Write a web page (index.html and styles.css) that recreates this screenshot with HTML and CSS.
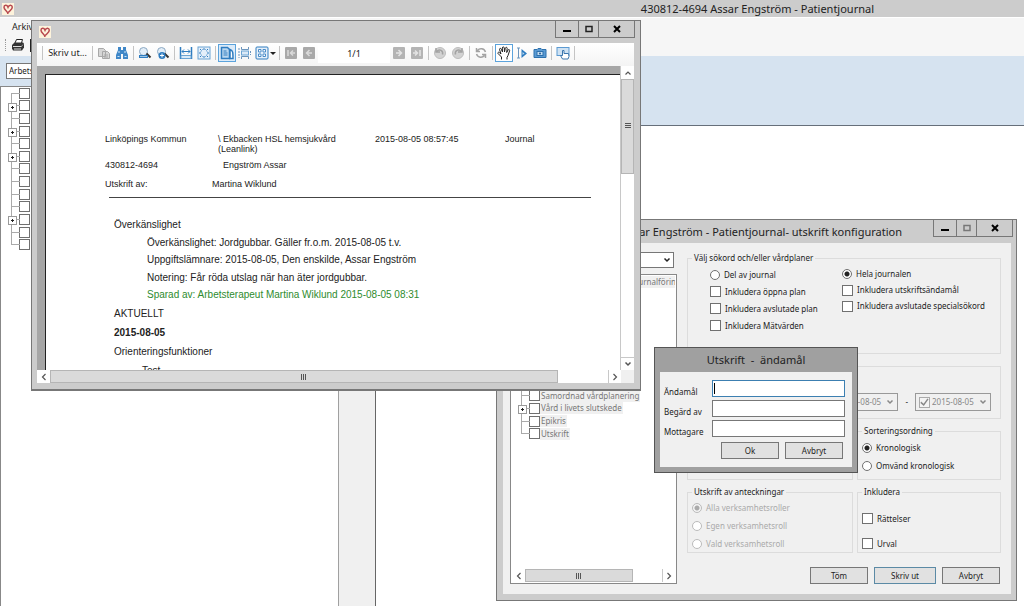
FILE: index.html
```html
<!DOCTYPE html>
<html lang="sv">

<head>
    <meta charset="UTF-8">
    <meta name="viewport" content="width=device-width, initial-scale=1.0">
    <title>430812-4694 Assar Engström - Patientjournal</title>
    <link rel="stylesheet" href="styles.css">
</head>

<body>

    <!-- shared shapes -->
    <svg class="defs" aria-hidden="true">
        <symbol id="heart" viewBox="0 0 12 12">
            <rect width="12" height="12" fill="#fdf3dc" />
            <path d="M6 11C6 8.500 2 7 2 4.200 2 2 5 1.500 6 4.200 7 1.500 10 1.500 10.300 4c.2 2-1.800 3.200-4 5.500" fill="none" stroke="#b8484e" stroke-width="1.500" />
        </symbol>
        <symbol id="down" viewBox="0 0 8 8">
            <path d="M1.500 2.500L4 5l2.500-2.500" fill="none" stroke="currentColor" stroke-width="1.500" />
        </symbol>
        <symbol id="up" viewBox="0 0 8 8">
            <path d="M1.500 5.500L4 3l2.500 2.500" fill="none" stroke="currentColor" stroke-width="1.200" />
        </symbol>
        <symbol id="left" viewBox="0 0 8 8">
            <path d="M5.500 1L2.500 4l3 3" fill="none" stroke="currentColor" stroke-width="1.200" />
        </symbol>
        <symbol id="right" viewBox="0 0 8 8">
            <path d="M2.500 1l3 3-3 3" fill="none" stroke="currentColor" stroke-width="1.200" />
        </symbol>
        <symbol id="min" viewBox="0 0 10 10">
            <path d="M1 7h8" stroke="#000" stroke-width="2" />
        </symbol>
        <symbol id="max" viewBox="0 0 10 10">
            <rect x="2" y="2.500" width="6" height="5" fill="none" stroke="currentColor" stroke-width="1.500" />
        </symbol>
        <symbol id="close" viewBox="0 0 10 10">
            <path d="M2 2l6 6M8 2L2 8" stroke="#000" stroke-width="2" />
        </symbol>
    </svg>

    <div class="desktop">

        <!-- main window -->
        <header class="app-title">
            <svg class="app-icon"><use href="#heart" /></svg>
            <h1>430812-4694 Assar Engström - Patientjournal</h1>
        </header>
        <nav class="app-menu">
            <button>Arkiv</button>
        </nav>
        <div class="app-tools">
            <span class="handle"></span>
            <button aria-label="Skriv ut">
                <svg width="14" height="13" viewBox="0 0 14 13">
                    <path d="M4 4l1.500-3.500h6L10.500 4" fill="#fff" stroke="#222" />
                    <path d="M1 6l2.500-2.500h8.500l1 1v4l-2 3H2L1 9.500z" fill="#333" />
                    <path d="M2 7.500h8.500M3 10h7" stroke="#ddd" />
                    <path d="M10 8l2-2.500" stroke="#999" />
                </svg>
            </button>
            <button aria-label="Förhandsgranska">
                <svg width="12" height="13" viewBox="0 0 12 13"><rect x="1" y="1" width="9" height="11" fill="#fff" stroke="#222" stroke-width="2" /></svg>
            </button>
        </div>
        <main class="app-body">
            <aside class="side">
                <div class="side-head">
                    <div class="dropdown">
                        <select aria-label="Journal">
                            <option>Arbetsterapeut</option>
                        </select>
                        <svg><use href="#down" /></svg>
                    </div>
                </div>
                <div class="side-tree">
                    <ul class="tree">
                        <li><input type="checkbox" aria-label="Sökord 1"></li>
                        <li class="node"><input type="checkbox" aria-label="Sökord 2"></li>
                        <li><input type="checkbox" aria-label="Sökord 3"></li>
                        <li class="node"><input type="checkbox" aria-label="Sökord 4"></li>
                        <li><input type="checkbox" aria-label="Sökord 5"></li>
                        <li class="node"><input type="checkbox" aria-label="Sökord 6"></li>
                        <li><input type="checkbox" aria-label="Sökord 7"></li>
                        <li><input type="checkbox" aria-label="Sökord 8"></li>
                        <li><input type="checkbox" aria-label="Sökord 9"></li>
                        <li><input type="checkbox" aria-label="Sökord 10"></li>
                        <li class="node"><input type="checkbox" aria-label="Sökord 11"></li>
                        <li><input type="checkbox" aria-label="Sökord 12"></li>
                        <li><input type="checkbox" aria-label="Sökord 13"></li>
                    </ul>
                </div>
            </aside>
            <div class="splitter"></div>
            <section class="record">
                <div class="record-head"></div>
                <div class="record-page"></div>
            </section>
        </main>

        <!-- print configuration -->
        <section class="window config">
            <header class="titlebar">
                <h2>430812-4694 Assar Engström - Patientjournal- utskrift konfiguration</h2>
                <div class="caption">
                    <button aria-label="Minimera"><svg><use href="#min" /></svg></button>
                    <button class="off" aria-label="Maximera"><svg><use href="#max" /></svg></button>
                    <button class="wide" aria-label="Stäng"><svg><use href="#close" /></svg></button>
                </div>
            </header>
            <div class="config-body">
                <div class="picker">
                    <div class="dropdown">
                        <select aria-label="Mall">
                            <option></option>
                        </select>
                        <svg><use href="#down" /></svg>
                    </div>
                    <div class="tree-box">
                        <ul class="tree">
                            <li class="node"><label><input type="checkbox"><span>Arbetsterapeut: samlad journalföring</span></label></li>
                            <li><input type="checkbox" aria-label="Rad 2"></li>
                            <li><input type="checkbox" aria-label="Rad 3"></li>
                            <li><input type="checkbox" aria-label="Rad 4"></li>
                            <li><input type="checkbox" aria-label="Rad 5"></li>
                            <li><input type="checkbox" aria-label="Rad 6"></li>
                            <li><input type="checkbox" aria-label="Rad 7"></li>
                            <li><input type="checkbox" aria-label="Rad 8"></li>
                            <li><input type="checkbox" aria-label="Rad 9"></li>
                            <li><label><input type="checkbox"><span>Samordnad vårdplanering</span></label></li>
                            <li class="node"><label><input type="checkbox"><span>Vård i livets slutskede</span></label></li>
                            <li><label><input type="checkbox"><span>Epikris</span></label></li>
                            <li><label><input type="checkbox"><span>Utskrift</span></label></li>
                        </ul>
                        <div class="scroll-x">
                            <button aria-label="Vänster"><svg><use href="#left" /></svg></button>
                            <div class="track"><div class="thumb"><i></i></div></div>
                            <button aria-label="Höger"><svg><use href="#right" /></svg></button>
                        </div>
                    </div>
                </div>

                <form class="options">
                    <fieldset class="plans">
                        <legend>Välj sökord och/eller vårdplaner</legend>
                        <div class="columns">
                            <div>
                                <label><input type="radio" name="scope">Del av journal</label>
                                <label><input type="checkbox">Inkludera öppna plan</label>
                                <label><input type="checkbox">Inkludera avslutade plan</label>
                                <label><input type="checkbox">Inkludera Mätvärden</label>
                            </div>
                            <div class="tight">
                                <label><input type="radio" name="scope" checked>Hela journalen</label>
                                <label><input type="checkbox">Inkludera utskriftsändamål</label>
                                <label><input type="checkbox">Inkludera avslutade specialsökord</label>
                            </div>
                        </div>
                    </fieldset>
                    <fieldset class="period">
                        <div class="date">
                            <input type="checkbox" aria-label="Från" checked disabled>
                            <div class="dropdown">
                                <select aria-label="Från datum" disabled><option>2015-08-05</option></select>
                                <svg><use href="#down" /></svg>
                            </div>
                        </div>
                        <span>-</span>
                        <div class="date">
                            <input type="checkbox" aria-label="Till" checked disabled>
                            <div class="dropdown">
                                <select aria-label="Till datum" disabled><option>2015-08-05</option></select>
                                <svg><use href="#down" /></svg>
                            </div>
                        </div>
                    </fieldset>
                    <div class="pair">
                        <fieldset class="order"></fieldset>
                        <fieldset class="order">
                            <legend>Sorteringsordning</legend>
                            <label><input type="radio" name="order" checked>Kronologisk</label>
                            <label><input type="radio" name="order">Omvänd kronologisk</label>
                        </fieldset>
                    </div>
                    <div class="pair">
                        <fieldset class="roles">
                            <legend>Utskrift av anteckningar</legend>
                            <label><input type="radio" name="role" checked disabled>Alla verksamhetsroller</label>
                            <label><input type="radio" name="role" disabled>Egen verksamhetsroll</label>
                            <label><input type="radio" name="role" disabled>Vald verksamhetsroll</label>
                        </fieldset>
                        <fieldset class="include">
                            <legend>Inkludera</legend>
                            <label><input type="checkbox">Rättelser</label>
                            <label><input type="checkbox">Urval</label>
                        </fieldset>
                    </div>
                    <div class="buttons">
                        <button type="button" class="btn">Töm</button>
                        <button type="button" class="btn default">Skriv ut</button>
                        <button type="button" class="btn">Avbryt</button>
                    </div>
                </form>
            </div>
        </section>

        <!-- print preview -->
        <section class="window preview">
            <header class="titlebar">
                <svg class="app-icon"><use href="#heart" /></svg>
                <div class="caption">
                    <button aria-label="Minimera"><svg><use href="#min" /></svg></button>
                    <button aria-label="Maximera"><svg><use href="#max" /></svg></button>
                    <button class="wide" aria-label="Stäng"><svg><use href="#close" /></svg></button>
                </div>
            </header>
            <div class="toolbar">
                <span class="sep"></span>
                <button class="print">Skriv ut...</button>
                <span class="sep"></span>
                <button aria-label="Kopiera">
                    <svg viewBox="0 0 14 14"><path d="M1.500 2.500h5l2 2v6h-7zM5.500 5.500h5l2 2v5h-7z" fill="#d6d6d6" stroke="#a8a8a8" /><path d="M7 9h4M7 11h4" stroke="#a8a8a8" /></svg>
                </button>
                <button aria-label="Sök">
                    <svg viewBox="0 0 14 14"><path d="M3 1h3v3h2V1h3v3l2 5v4H8V8H6v5H1V9l2-5z" fill="#3f87c8" /><path d="M2.500 10.500h2M9.500 10.500h2M4 5v2M10 5v2" stroke="#cfe4f6" /></svg>
                </button>
                <span class="sep"></span>
                <button aria-label="Zooma ut">
                    <svg viewBox="0 0 14 14"><circle cx="5.500" cy="5.500" r="4" fill="#e3eef8" stroke="#8ba8c2" /><path d="M8.500 7.500l4 4" stroke="#333" stroke-width="2" /><path d="M1 10.500h9" stroke="#2e7cc0" stroke-width="3" /><path d="M2 10.500h7" stroke="#9cc4e6" /></svg>
                </button>
                <button aria-label="Zooma in">
                    <svg viewBox="0 0 14 14"><circle cx="5.500" cy="5.500" r="4" fill="#e3eef8" stroke="#8ba8c2" /><path d="M8.500 7.500l4 4" stroke="#333" stroke-width="2" /><circle cx="6" cy="9.500" r="3.500" fill="#2e7cc0" /><path d="M4 9.500h4M6 7.500v4" stroke="#fff" /></svg>
                </button>
                <span class="sep"></span>
                <button aria-label="Sidbredd">
                    <svg viewBox="0 0 14 14"><path d="M1.500 1v12M12.500 1v12" stroke="#2e7cc0" stroke-width="1.500" /><path d="M3 5.500h8M5 3.500l-2 2 2 2M9 3.500l2 2-2 2" fill="none" stroke="#2e7cc0" /><path d="M2 9.500h10v3H2z" fill="#d9eaf8" stroke="#6ba4d4" /></svg>
                </button>
                <button aria-label="Hela sidan">
                    <svg viewBox="0 0 14 14"><rect x="1" y="1" width="12" height="12" fill="#e4effa" stroke="#6ba4d4" /><path d="M5.500 4L7 2.500 8.500 4M5.500 10L7 11.500 8.500 10M4 5.500L2.500 7 4 8.500M10 5.500L11.500 7 10 8.500M3 3l1.500 1.500M11 3L9.500 4.500M3 11l1.500-1.500M11 11L9.500 9.500" fill="none" stroke="#2e7cc0" /></svg>
                </button>
                <span class="sep"></span>
                <button class="on" aria-label="En sida">
                    <svg viewBox="0 0 14 14"><path d="M1.500 1.500h6l2 2v9h-8z" fill="#b9d6ef" stroke="#2e7cc0" stroke-width="1.500" /><path d="M10 3.500c3 1 3 3 3 9h-3z" fill="#fff" stroke="#2e7cc0" stroke-width="1.500" /><path d="M3.500 5h3M3.500 7h4M3.500 9h4" stroke="#2e7cc0" /></svg>
                </button>
                <button aria-label="Kontinuerlig">
                    <svg viewBox="0 0 14 14"><path d="M3.500 1v2.500h7V1M3.500 13v-2.500h7V13" fill="none" stroke="#6b95bd" /><rect x="3.500" y="5" width="7" height="4" fill="#dceaf7" stroke="#6ba4d4" /><path d="M1 2v10M12.500 5v4" stroke="#6b95bd" stroke-dasharray="2 1" /></svg>
                </button>
                <button class="more" aria-label="Flera sidor">
                    <svg viewBox="0 0 14 14"><rect x="1" y="1" width="12" height="12" rx="1" fill="#e6f0fa" stroke="#2e7cc0" /><path d="M3.500 3.500h2.500v2.500H3.500zM8 3.500h2.500v2.500H8zM3.500 8h2.500v2.500H3.500zM8 8h2.500v2.500H8z" fill="#fff" stroke="#4a8cc8" /></svg>
                    <i></i>
                </button>
                <span class="sep"></span>
                <button aria-label="Första sidan">
                    <svg viewBox="0 0 14 14"><rect x="1" y="1" width="12" height="12" rx="1" fill="#a9a9a9" /><path d="M4 4v6M11 7H7M9 4.500L6.500 7 9 9.500" fill="none" stroke="#dadada" stroke-width="1.500" /></svg>
                </button>
                <button aria-label="Föregående sida">
                    <svg viewBox="0 0 14 14"><rect x="1" y="1" width="12" height="12" rx="1" fill="#a9a9a9" /><path d="M10 7H5M7.500 4L4.500 7l3 3" fill="none" stroke="#dadada" stroke-width="1.500" /></svg>
                </button>
                <input class="page-no" type="text" value="1/1" aria-label="Sida">
                <button aria-label="Nästa sida">
                    <svg viewBox="0 0 14 14"><rect x="1" y="1" width="12" height="12" rx="1" fill="#b4b4b4" /><path d="M4 7h5M6.500 4l3 3-3 3" fill="none" stroke="#e4e4e4" stroke-width="1.500" /></svg>
                </button>
                <button aria-label="Sista sidan">
                    <svg viewBox="0 0 14 14"><rect x="1" y="1" width="12" height="12" rx="1" fill="#b4b4b4" /><path d="M10 4v6M3 7h4M5 4.500L7.500 7 5 9.500" fill="none" stroke="#e4e4e4" stroke-width="1.500" /></svg>
                </button>
                <span class="sep"></span>
                <button aria-label="Bakåt">
                    <svg viewBox="0 0 14 14"><circle cx="7" cy="7" r="5.500" fill="#d2d2d2" stroke="#bdbdbd" /><path d="M3 2v4h4M3.500 5.500c3-3 7-1 6 3" fill="none" stroke="#a3a3a3" stroke-width="1.500" /></svg>
                </button>
                <button aria-label="Framåt">
                    <svg viewBox="0 0 14 14"><circle cx="7" cy="7" r="5.500" fill="#d2d2d2" stroke="#bdbdbd" /><path d="M11 2v4H7M10.500 5.500c-3-3-7-1-6 3" fill="none" stroke="#a3a3a3" stroke-width="1.500" /></svg>
                </button>
                <span class="sep"></span>
                <button aria-label="Uppdatera">
                    <svg viewBox="0 0 14 14"><path d="M11.500 6C10 2 5.500 2 3.500 4.500M2.500 8c1.500 4 6 4 8 1.500M2.500 2v3.500H6M11.500 12V8.500H8" fill="none" stroke="#a3a3a3" stroke-width="1.500" /></svg>
                </button>
                <span class="sep"></span>
                <button class="on hand" aria-label="Panorera">
                    <svg viewBox="0 0 14 14"><path d="M4.500 13.500V11L1 7.500c-.5-1.500 1-1.500 1.500-.8L4 8 2.500 3.500c0-1.500 1.500-1.500 1.800-.3L5.500 6 5.300 2c.2-1.500 1.700-1.500 2 0L7.500 6l.8-3.800c.5-1.400 2-1 1.900.2L9.700 6.500l1.300-2.500c.8-1 2-.3 1.600.8L11 9.500l-1 2v2" fill="#fff" stroke="#222" /></svg>
                </button>
                <button aria-label="Markera text">
                    <svg viewBox="0 0 14 14"><path d="M2 2h3M3.500 2v10M2 12h3" stroke="#6b95bd" /><path d="M6.500 3l5.500 4.500-5.500 4.500z" fill="#2e7cc0" /><path d="M7.500 6l2 1.500-2 1.500z" fill="#bcd9f0" /></svg>
                </button>
                <button aria-label="Ögonblicksbild">
                    <svg viewBox="0 0 14 14"><path d="M1 3.500h3L5 2.500h3l1 1h4v8H1z" fill="#5b9ad2" stroke="#2c70ad" /><rect x="4" y="5.500" width="6" height="4" fill="#c6def2" stroke="#2c70ad" /><circle cx="7" cy="7.500" r="1" fill="#1f5c96" /></svg>
                </button>
                <span class="sep"></span>
                <button aria-label="Pekläge">
                    <svg viewBox="0 0 14 14"><rect x="1" y="1.500" width="12" height="8" fill="#cfe2f3" stroke="#5b9ad2" /><path d="M6.500 13L4.500 9.500l2 0V4.500h1.500v3h4.500l.5 3-1 2.500z" fill="#fff" stroke="#3a76ae" /></svg>
                </button>
                <span class="sep"></span>
            </div>
            <div class="viewer">
                <article class="sheet">
                    <div class="sheet-head">
                        <span>Linköpings Kommun</span>
                        <span>\ Ekbacken HSL hemsjukvård<br>(Leanlink)</span>
                        <span>2015-08-05 08:57:45</span>
                        <span>Journal</span>
                    </div>
                    <div class="sheet-head patient">
                        <span>430812-4694</span>
                        <span>Engström Assar</span>
                    </div>
                    <div class="sheet-head author">
                        <span>Utskrift av:</span>
                        <span>Martina Wiklund</span>
                    </div>
                    <hr>
                    <div class="notes">
                        <h3>Överkänslighet</h3>
                        <div class="entry">
                            <p>Överkänslighet: Jordgubbar. Gäller fr.o.m. 2015-08-05 t.v.</p>
                            <p>Uppgiftslämnare: 2015-08-05, Den enskilde, Assar Engström</p>
                            <p>Notering: Får röda utslag när han äter jordgubbar.</p>
                            <p class="saved">Sparad av: Arbetsterapeut Martina Wiklund 2015-08-05 08:31</p>
                        </div>
                        <p>AKTUELLT</p>
                        <p><b>2015-08-05</b></p>
                        <p>Orienteringsfunktioner</p>
                        <p class="sub">Test</p>
                    </div>
                </article>
                <div class="scroll-y">
                    <button aria-label="Upp"><svg><use href="#up" /></svg></button>
                    <div class="track"><div class="thumb"><i></i></div></div>
                    <button aria-label="Ned"><svg><use href="#down" /></svg></button>
                </div>
            </div>
            <div class="scroll-x">
                <button aria-label="Vänster"><svg><use href="#left" /></svg></button>
                <div class="track"><div class="thumb"><i></i></div></div>
                <button aria-label="Höger"><svg><use href="#right" /></svg></button>
            </div>
        </section>

        <!-- purpose dialog -->
        <section class="window dialog">
            <h2>Utskrift&nbsp; -&nbsp; ändamål</h2>
            <form>
                <label for="purpose">Ändamål</label>
                <div class="field"><input type="text" id="purpose" class="active"><span class="caret"></span></div>
                <label for="asked">Begärd av</label>
                <div class="field"><input type="text" id="asked"></div>
                <label for="receiver">Mottagare</label>
                <div class="field"><input type="text" id="receiver"></div>
                <div class="buttons">
                    <button type="button" class="btn">Ok</button>
                    <button type="button" class="btn">Avbryt</button>
                </div>
            </form>
        </section>

    </div>

</body>

</html>
```

FILE: styles.css
```css
* {
    box-sizing: border-box;
}

body {
    margin: 0;
    font-family: "Noto Sans", sans-serif;
    font-size: 8px;
    line-height: 12px;
    color: #222;
    background-color: #fff;
}

h1, h2, h3, p, ul {
    margin: 0;
    padding: 0;
    font-weight: normal;
}

button, input, select {
    font: inherit;
    color: inherit;
    margin: 0;
    padding: 0;
}

button {
    border: none;
    background: none;
    display: flex;
    align-items: center;
    justify-content: center;
}

.defs {
    position: absolute;
    width: 0;
    height: 0;
}

.desktop {
    position: relative;
    min-height: 100vh;
    overflow: hidden;
    display: flex;
    flex-direction: column;
}

.app-icon {
    width: 12px;
    height: 12px;
}

/* Main window */

.app-title {
    display: flex;
    align-items: center;
    justify-content: space-between;
    height: 18px;
    padding: 0 150px 0 2px;
    background-color: #ccc;
    border-bottom: 1px solid #fff;
}

h1, h2 {
    font-size: 11px;
    line-height: 16px;
}

.app-menu {
    padding: 3px 12px;
    background-color: #f6f6f6;
    font-size: 9px;
}

.app-tools {
    display: flex;
    align-items: center;
    gap: 5px;
    height: 20px;
    padding: 0 5px 2px;
    background-color: #f6f6f6;
}

.handle {
    height: 12px;
    border-left: 1px dotted #999;
}

.app-body {
    flex: 1;
    display: flex;
}

.side {
    width: 339px;
    border-right: 1px solid #a0a0a0;
    display: flex;
    flex-direction: column;
}

.side-head {
    height: 30px;
    padding: 7px 6px;
    background-color: #d6e3f0;
}

.side-tree {
    flex: 1;
    padding-left: 10px;
    border-top: 1px solid #888;
    border-left: 1px solid #888;
}

.splitter {
    width: 37px;
    background-color: #f0f0f0;
    border-right: 1px solid #666;
}

.record {
    flex: 1;
}

.record-head {
    height: 70px;
    background-color: #d6e3f0;
    border-bottom: 1px solid #666f7a;
}

/* Controls */

.dropdown {
    position: relative;
}

.dropdown select {
    appearance: none;
    display: block;
    width: 100%;
    height: 16px;
    padding: 0 2px;
    border: 1px solid #777;
    border-radius: 0;
    background-color: #fff;
}

.dropdown svg {
    position: absolute;
    right: 3px;
    top: 4px;
    width: 8px;
    height: 8px;
    pointer-events: none;
}

input[type="checkbox"], input[type="radio"] {
    appearance: none;
    flex: none;
    width: 11px;
    height: 11px;
    border: 1px solid #707070;
    background-color: #fff;
}

input[type="radio"] {
    width: 10px;
    height: 10px;
    border-radius: 50%;
}

input[type="radio"]:checked {
    background: radial-gradient(circle, #222 2px, #fff 3px);
}

input[type="radio"]:disabled {
    border-color: #bbb;
}

input[type="radio"]:disabled:checked {
    background: radial-gradient(circle, #aaa 2px, #f4f4f4 3px);
}

input[type="checkbox"]:disabled {
    border-color: #aaa;
    background-color: #f4f4f4;
}

input[type="checkbox"]:checked::before {
    content: "";
    display: block;
    height: 9px;
    background-color: #888;
    clip-path: polygon(12% 45%, 40% 70%, 82% 10%, 95% 20%, 42% 95%, 5% 60%);
}

.btn {
    width: 58px;
    height: 17px;
    border: 1px solid #777;
    background-color: #e1e1e1;
}

.btn.default {
    width: 62px;
    border-color: #5b8aa5;
}

.buttons {
    display: flex;
    justify-content: flex-end;
    gap: 6px;
}

.tree {
    list-style: none;
    display: grid;
    grid-template-rows: repeat(13, 1fr);
    height: 164px;
}

.tree li {
    position: relative;
    display: flex;
    align-items: center;
    padding-left: 8px;
    white-space: nowrap;
    color: #777;
}

.tree label {
    display: flex;
    align-items: center;
}

.tree label span {
    background-color: #f0f0f0;
    line-height: 12px;
    padding: 0 1px;
}

/* connector lines */
.tree li::before {
    content: "";
    width: 8px;
    height: 100%;
    position: absolute;
    left: 0;
    top: 0;
    border-left: 1px solid #aaa;
    background: linear-gradient(#aaa, #aaa) 0 50% / 8px 1px no-repeat;
}

.tree li:first-child::before {
    top: 50%;
    height: 50%;
    background-position: 0 0;
}

.tree li:last-child::before {
    height: 50%;
    background-position: 0 100%;
}

.tree .node::after {
    content: "";
    position: absolute;
    left: -3px;
    top: 3px;
    width: 7px;
    height: 7px;
    border: 1px solid #999;
    background: linear-gradient(#222, #222) 50% 50% / 3px 1px no-repeat, linear-gradient(#222, #222) 50% 50% / 1px 3px no-repeat, #fff;
}

/* Scroll bars */

.scroll-x, .scroll-y {
    display: flex;
    background-color: #fff;
    color: #555;
}

.scroll-x {
    height: 13px;
}

.scroll-y {
    flex-direction: column;
    width: 14px;
    border-left: 1px solid #c8c8c8;
}

.scroll-x button, .scroll-y button {
    width: 13px;
    height: 13px;
}

.scroll-x button:last-child {
    border-left: 1px solid #c8c8c8;
}

.scroll-y button:last-child {
    border-top: 1px solid #c8c8c8;
}

.scroll-x svg, .scroll-y svg {
    width: 8px;
    height: 8px;
}

.track {
    flex: 1;
}

.thumb {
    display: flex;
    align-items: center;
    justify-content: center;
    background-color: #dadada;
    border: 1px solid #b5b5b5;
}

.scroll-x .thumb {
    width: 91%;
    height: 13px;
}

.scroll-y .thumb {
    height: 34%;
}

.thumb i {
    width: 6px;
    height: 6px;
    background: repeating-linear-gradient(90deg, #555 0 1px, #dadada 1px 2px);
}

.scroll-y .thumb i {
    background: repeating-linear-gradient(#555 0 1px, #dadada 1px 2px);
}

/* Windows */

.window {
    position: absolute;
    border: 1px solid #777;
    background-color: #ccc;
}

.titlebar {
    display: flex;
    align-items: center;
    height: 23px;
}

.caption {
    display: flex;
    align-self: flex-start;
    margin-left: auto;
    border: 1px solid #777;
    border-top: none;
}

.caption button {
    width: 22px;
    height: 16px;
}

.caption button + button {
    width: 20px;
    border-left: 1px solid #777;
}

.caption button.wide {
    width: 36px;
}

.caption button.off {
    color: #777;
}

.caption svg {
    width: 10px;
    height: 10px;
}

/* Print preview */

.preview {
    left: 31px;
    top: 20px;
    width: calc(100% - 414px);
    padding: 0 6px 6px 5px;
    border-width: 1px 1px 2px;
}

.preview .titlebar {
    height: 22px;
    padding-left: 2px;
}

.preview .caption {
    margin-right: -1px;
}

.toolbar {
    display: flex;
    align-items: center;
    height: 23px;
    padding: 0 0 3px 3px;
    background: linear-gradient(#fff, #f4f4f4);
}

.toolbar button {
    flex: none;
    width: 18px;
    height: 18px;
}

.toolbar svg {
    flex: none;
    width: 14px;
    height: 14px;
}

.toolbar .print {
    width: 45px;
    font-size: 9px;
}

.toolbar .on {
    border: 1px solid #5ba3dc;
    background-color: #dcebf9;
}

.toolbar .hand {
    background-color: #fff;
}

.toolbar .more {
    width: 23px;
    gap: 1px;
}

.more i {
    border: 3px solid transparent;
    border-top-color: #222;
    border-bottom: none;
}

.sep {
    flex: none;
    width: 1px;
    height: 14px;
    margin: 0 2px;
    background-color: #c4c4c4;
}

.page-no {
    width: 72px;
    height: 20px;
    border: none;
    background-color: #fff;
    font-size: 9px;
    text-align: center;
}

.viewer {
    display: flex;
    height: 304px;
    background-color: #a6a6a6;
}

.sheet {
    flex: 1;
    margin: 8px 0 0 8px;
    padding: 59px 29px 0 59px;
    overflow: hidden;
    background-color: #fff;
    border-left: 1px solid #222;
    border-top: 1px solid #222;
    font-family: "Liberation Sans", Arial, sans-serif;
    font-size: 10px;
}

.sheet-head {
    display: grid;
    grid-template-columns: 113px 157px 130px 1fr;
    font-size: 9px;
    line-height: 10px;
}

.sheet-head.patient {
    grid-template-columns: 118px 1fr;
    margin-top: 6px;
}

.sheet-head.author {
    grid-template-columns: 107px 1fr;
    margin-top: 9px;
}

.sheet hr {
    margin: 8px 0 0 4px;
    border: none;
    border-top: 1px solid #444;
}

.notes {
    padding: 18px 0 0 9px;
}

.notes h3 {
    font-size: 10px;
    line-height: 18px;
}

.notes p {
    line-height: 19px;
}

.entry {
    display: grid;
    grid-template-rows: repeat(4, 1fr);
    align-items: center;
    height: 70px;
    padding-left: 33px;
}

.entry p {
    line-height: 14px;
}

.saved {
    color: #2e8b2e;
}

.notes .sub {
    padding-left: 28px;
}

.preview > .scroll-x {
    padding-right: 13px;
    background: linear-gradient(#f0f0f0, #f0f0f0) 100% 0 / 13px 13px no-repeat, #fff;
}

/* Print configuration */

.config {
    left: 496px;
    right: 7px;
    top: 219px;
    padding: 0 5px 6px 6px;
}

.config .titlebar h2 {
    flex: 1;
    padding-right: 31px;
    text-align: right;
    white-space: nowrap;
}

.config .caption {
    margin-right: -2px;
}

.config-body {
    display: flex;
    gap: 10px;
    padding: 9px 10px 10px 7px;
    background-color: #f0f0f0;
}

.picker {
    width: 167px;
    display: flex;
    flex-direction: column;
    gap: 6px;
}

.picker .dropdown {
    margin-right: 3px;
}

.tree-box {
    flex: 1;
    display: flex;
    flex-direction: column;
    justify-content: space-between;
    padding: 1px;
    overflow: hidden;
    border: 1px solid #888;
    background-color: #fff;
}

.tree-box .tree {
    padding-left: 9px;
    overflow: hidden;
}

.tree-box .scroll-x .thumb {
    width: 79%;
}

.options {
    flex: 1;
    display: flex;
    flex-direction: column;
    gap: 6px;
}

fieldset {
    min-width: 0;
    margin: 0;
    padding: 0;
    border: 1px solid #dcdcdc;
}

legend {
    margin-left: 4px;
    padding: 0 2px;
    line-height: 12px;
}

fieldset label {
    display: flex;
    align-items: center;
    gap: 4px;
    height: 18px;
    margin-left: 4px;
}

fieldset label:has(:disabled) {
    color: #aaa;
}

.plans {
    height: 102px;
    padding-top: 2px;
}

.columns {
    display: grid;
    grid-template-columns: 132px 1fr;
    padding-left: 18px;
}

.columns label {
    height: 17px;
}

.tight label {
    height: 16px;
}

.period {
    display: flex;
    align-items: center;
    justify-content: flex-end;
    gap: 7px;
    height: 53px;
    margin-top: 6px;
    padding: 26px 9px 0 0;
}

.date {
    display: flex;
    align-items: center;
    width: 76px;
    height: 18px;
    padding-left: 3px;
    border: 1px solid #999;
    color: #888;
}

.date .dropdown {
    flex: 1;
}

.date .dropdown select {
    border: none;
    background: none;
    opacity: 1;
}

.pair {
    display: grid;
    grid-template-columns: 166px 1fr;
    gap: 4px;
}

.order {
    height: 55px;
    padding-top: 2px;
}

.order:first-child {
    height: 49px;
    align-self: end;
}

.roles, .include {
    height: 67px;
    padding-top: 1px;
}

.include {
    padding-top: 8px;
}

.include label {
    height: 25px;
}

.options .buttons {
    margin-top: 8px;
    padding-right: 1px;
}

/* Purpose dialog */

.dialog {
    left: 654px;
    top: 347px;
    width: 204px;
    padding: 0 5px 5px;
    border-color: #555;
    background-color: #a0a0a0;
}

.dialog h2 {
    line-height: 24px;
    text-align: center;
}

.dialog form {
    display: grid;
    grid-template-columns: 48px 1fr;
    row-gap: 3px;
    align-items: end;
    padding: 8px 7px 8px 4px;
    background-color: #f0f0f0;
}

.dialog label {
    line-height: 10px;
}

.field {
    position: relative;
}

.field input {
    display: block;
    width: 100%;
    height: 17px;
    border: 1px solid #777;
    background-color: #fff;
}

.field .active {
    border-color: #3c7fb1;
}

.caret {
    position: absolute;
    left: 2px;
    top: 3px;
    width: 1px;
    height: 11px;
    background-color: #000;
}

.dialog .buttons {
    grid-column: 1 / 3;
    padding: 2px 2px 0 0;
}
```
